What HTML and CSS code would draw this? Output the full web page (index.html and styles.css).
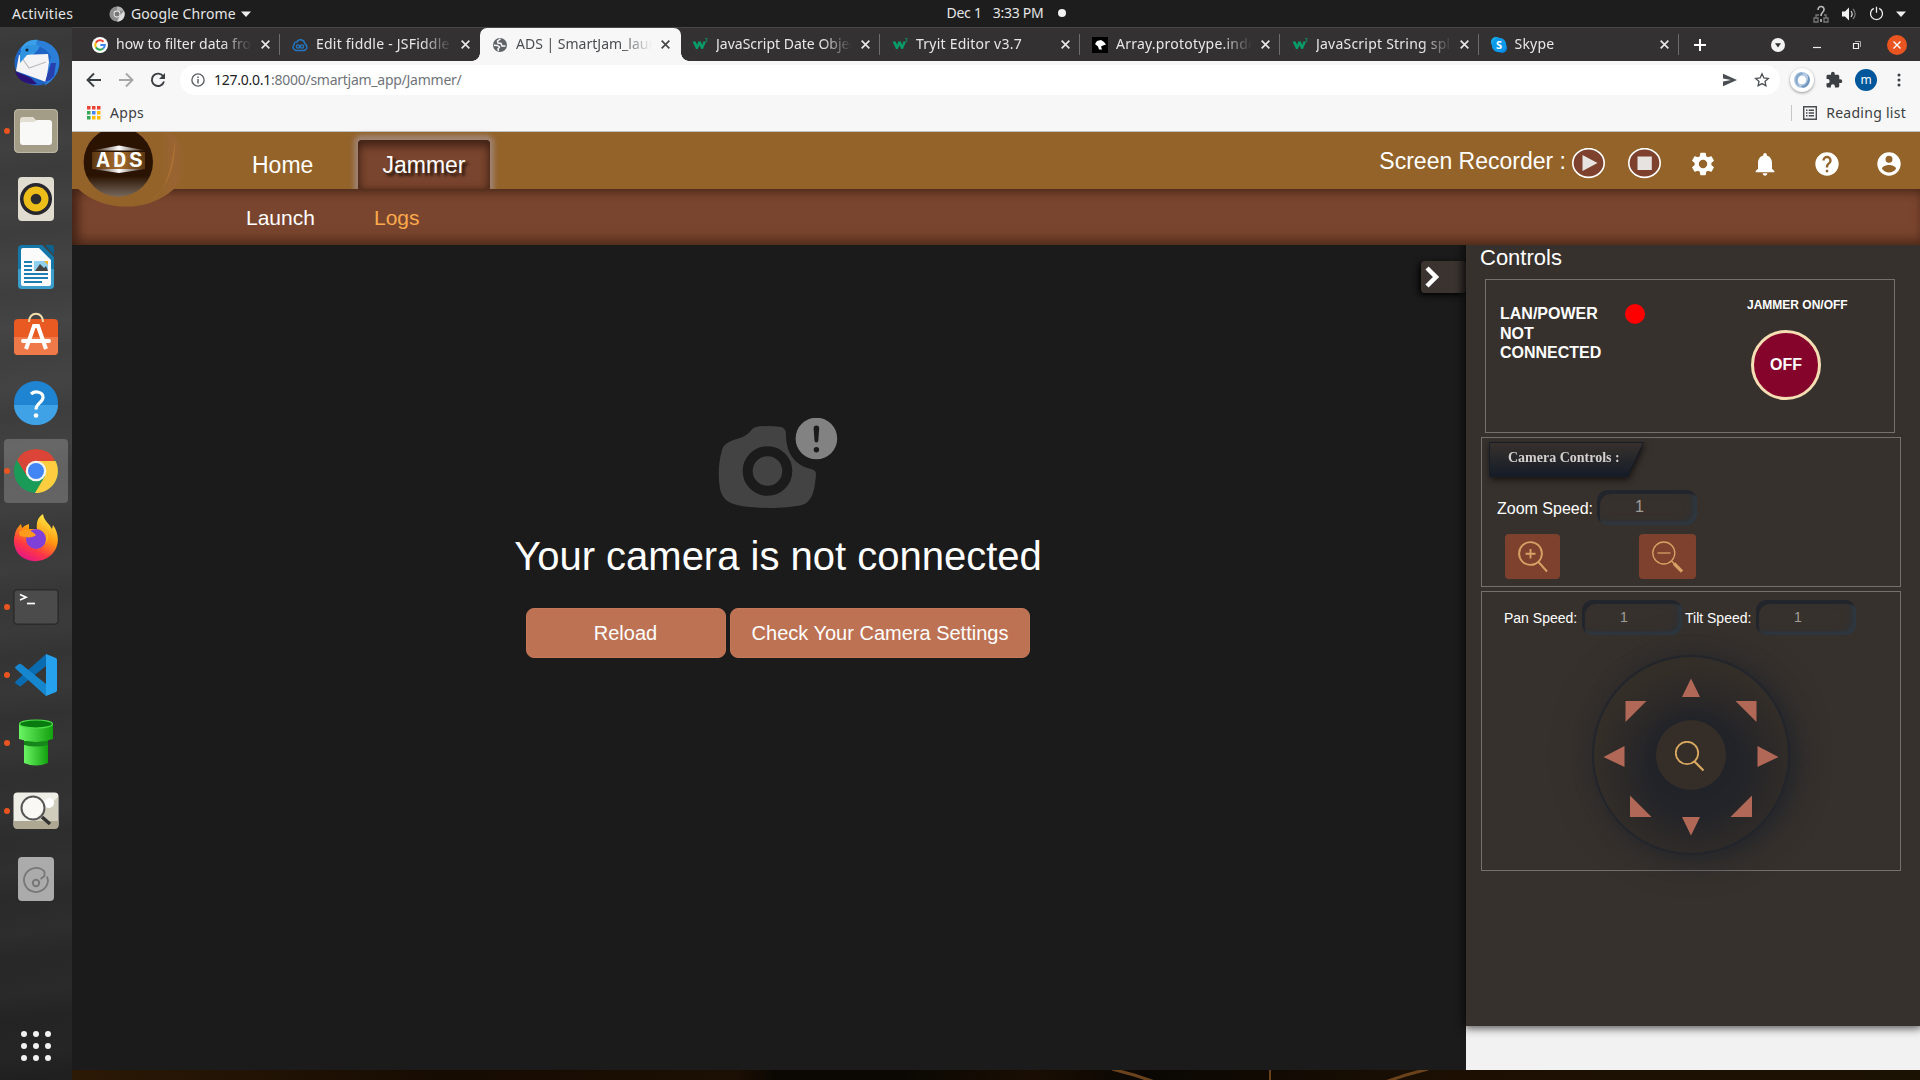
FILE: index.html
```html
<!DOCTYPE html>
<html lang="en">
<head>
<meta charset="utf-8">
<title>ADS | SmartJam_launch</title>
<link rel="stylesheet" href="styles.css">
</head>
<body>
<div class="desktop">
  <header class="topbar">
    <span class="activities">Activities</span>
    <span class="app-menu">
      <svg width="16" height="16" viewBox="0 0 16 16"><circle cx="8" cy="8" r="7.6" fill="#8d8d8d"/><path d="M8 .4a7.6 7.6 0 0 1 6.9 4.4H8z" fill="#b5b5b5"/><path d="M15 4.8A7.6 7.6 0 0 1 8 15.600l3-6z" fill="#ddd"/><circle cx="8" cy="8" r="3.400" fill="#eee"/><circle cx="8" cy="8" r="2.500" fill="#777"/></svg>
      <span class="app-name">Google Chrome</span>
      <svg width="10" height="6" viewBox="0 0 10 6"><path d="M0 .5h10L5 6z" fill="#eee"/></svg>
    </span>
    <span class="clock"><span>Dec 1</span><span>3:33 PM</span><i class="clock-dot"></i></span>
    <span class="status">
      <svg width="16" height="18" viewBox="0 0 16 18" fill="none" stroke="#777" stroke-width="1.300"><path d="M1 13h4v4H1zM11 13h4v4h-4zM3 13v-3h3M13 13v-3h-2"/><path d="M5 5c0-5 6.500-4.500 6 0-.3 2-3 2.500-3 6M8 14v3" stroke="#bbb" stroke-width="1.600"/></svg>
      <svg width="16" height="14" viewBox="0 0 16 14"><path d="M1 4.500h3L8 .5v13l-4-4H1z" fill="#f2f2f2"/><path d="M10 4c1.500 2 1.500 4 0 6" fill="none" stroke="#ddd" stroke-width="1.200"/><path d="M12 2c3 3.500 3 6.500 0 10" fill="none" stroke="#777" stroke-width="1.200"/></svg>
      <svg width="15" height="15" viewBox="0 0 15 15" fill="none" stroke="#eee" stroke-width="1.300"><path d="M7.500 .8v6M4.800 2.300a6 6 0 1 0 5.400 0"/></svg>
      <svg width="10" height="6" viewBox="0 0 10 6"><path d="M0 .5h10L5 6z" fill="#eee"/></svg>
    </span>
  </header>

  <div class="workspace">
    <nav class="dock">
      <div class="dock-item"><svg width="50" height="50" viewBox="0 0 50 50"><circle cx="26" cy="25" r="22.500" fill="#1f64c4"/><path d="M17 6C25-1 42 3 47 16c4 12-2 26-14 32 3-4 3-8 2-14l5-15C36 10 28 8 17 6z" fill="#2b7fd8"/><path d="M10 11c3-7 10-10 17-9-3 3-2 5 1 8l-8 9-11 5z" fill="#3ba0e8"/><path d="M8 17l29-1 1 8-3 20L5 33z" fill="#f4f4f6"/><path d="M9 17l9 13 17-6" fill="none" stroke="#bbb" stroke-width="1.200"/><path d="M4 33c6 3 10 4 16 7l6 6C15 47 7 43 4 33z" fill="#2b1276"/><path d="M40 25l-6 19 5-2 4-4 2-13z" fill="#283fae"/><path d="M9 16C11 8 19 5 29 8l-4 6-9 3-7 8z" fill="#2f93e0"/><circle cx="16" cy="12" r="1.500" fill="#123"/></svg></div>
      <div class="dock-item running"><svg width="44" height="44" viewBox="0 0 44 44"><rect width="44" height="44" rx="4.500" fill="#a39c86"/><rect x=".5" y=".5" width="43" height="43" rx="4" fill="none" stroke="#bdb7a5"/><path d="M6 11q0-3 3-3h10l4 4h12q3 0 3 3v9H6z" fill="#e2ded2"/><path d="M6 15q0-2 3-2h11l3-2h12q3 0 3 3v19q0 3-3 3H9q-3 0-3-3z" fill="#f9f9f8"/></svg></div>
      <div class="dock-item"><svg width="44" height="44" viewBox="0 0 44 44"><rect x="4" width="36" height="44" rx="4" fill="#e0dccf"/><circle cx="22" cy="22" r="16" fill="#26262e"/><circle cx="22" cy="22" r="12.500" fill="#edbd1a"/><circle cx="22" cy="22" r="5.300" fill="#2c2c2e"/></svg></div>
      <div class="dock-item"><svg width="44" height="44" viewBox="0 0 44 44"><path d="M8 0h20l12 12v28q0 4-4 4H8q-4 0-4-4V4q0-4 4-4z" fill="#1477a8"/><path d="M4 24h36v16q0 4-4 4H8q-4 0-4-4z" fill="#3a9dcb"/><path d="M9 3h16l12 12v24q0 2-2 2H9q-2 0-2-2V5q0-2 2-2z" fill="#fbfbfb"/><path d="M31 0h7q2 0 2 2v8z" fill="#10608c"/><path d="M10 17h8M10 21h8M10 25h8M10 29h24M10 33h24M10 37h18" stroke="#1b7db0" stroke-width="2"/><path d="M20 16h14v10H20z" fill="#8ed0ee"/><path d="M21 26l5-7 4 4 2-2 2 5z" fill="#444"/><path d="M30 16h4v4z" fill="#f0b429"/></svg></div>
      <div class="dock-item"><svg width="44" height="46" viewBox="0 0 44 46"><rect y="7" width="44" height="36" rx="4" fill="#e95a23"/><path d="M0 25h44v14q0 4-4 4H4q-4 0-4-4z" fill="#f0794a"/><path d="M15 10c0-11 14-11 14 0" fill="none" stroke="#f3dfae" stroke-width="2"/><path d="M12 37l8-23h4l8 23" fill="none" stroke="#fff" stroke-width="4"/><path d="M9 29h26" stroke="#fff" stroke-width="4" stroke-linecap="round"/></svg></div>
      <div class="dock-item"><svg width="44" height="44" viewBox="0 0 44 44"><circle cx="22" cy="22" r="22" fill="#1f84d2"/><path d="M0 24h44a22 20 0 0 1-44 0z" fill="#3fa2e6"/><path d="M17 13c4-3.500 12-2.500 12 3.500 0 5-7 5.500-7 12" fill="none" stroke="#fff" stroke-width="3.200"/><circle cx="22" cy="34.500" r="2.300" fill="#fff"/></svg></div>
      <div class="dock-item running focused"><svg width="46" height="46" viewBox="0 0 46 46"><circle cx="23" cy="23" r="22" fill="#1a9c58"/><path d="M23 23L3.900 12.100A22 22 0 0 1 42.100 12.100z" fill="#db4437"/><path d="M4 12l10 16 9-5z" fill="#db4437"/><path d="M23 13h19.500A22 22 0 0 1 22 45l10-17z" fill="#ffcd40"/><circle cx="23" cy="23" r="10.300" fill="#f4f4f4"/><circle cx="23" cy="23" r="8" fill="#4285f4"/></svg></div>
      <div class="dock-item"><svg width="46" height="50" viewBox="0 0 46 50"><defs><linearGradient id="fx" x1="0.800" y1="0" x2="0.300" y2="1"><stop offset="0" stop-color="#fff44f"/><stop offset=".45" stop-color="#ff980e"/><stop offset=".75" stop-color="#ff3647"/><stop offset="1" stop-color="#e31587"/></linearGradient></defs><path d="M2 20C3 15 5 13 8 10l1 4q3-3 7-4v5h8c-1-7 1-12 6-15 1 7 6 9 9 15l1-4c6 8 7 20 0 28-9 11-28 11-36-1C1 33 0 26 2 20z" fill="url(#fx)"/><circle cx="23" cy="25" r="10" fill="#8040d8"/><path d="M24 14c9-1 12 8 8 16 4-4 5-13-3-18z" fill="#ffb52a"/><path d="M6 18c6-4 12-2 17 3-5 4-10 2-16 1z" fill="#ff9a1c"/></svg></div>
      <div class="dock-item running"><svg width="46" height="36" viewBox="0 0 46 36"><rect x=".8" y=".8" width="44.400" height="34.400" rx="3.500" fill="#4b4b4b" stroke="#2b2b2b" stroke-width="1.500"/><path d="M7 5.500l6 2.800L7 11" fill="none" stroke="#fff" stroke-width="1.700"/><path d="M14 14.500h8" stroke="#fff" stroke-width="1.700"/></svg></div>
      <div class="dock-item running"><svg width="42" height="42" viewBox="0 0 42 42"><path d="M0 29l4 3q1 .5 2 0l25-20V0L1 27q-1 1-1 2z" fill="#0a6bb0"/><path d="M0 13l4-3q1-.5 2 0l25 20v12L1 15q-1-1-1-2z" fill="#1687cf"/><path d="M31 0l10 4q1 .5 1 2v30q0 1.500-1 2l-10 4z" fill="#25a1ee"/></svg></div>
      <div class="dock-item running"><svg width="36" height="48" viewBox="0 0 36 48"><defs><linearGradient id="pipe"><stop offset="0" stop-color="#6bf464"/><stop offset="1" stop-color="#12a00e"/></linearGradient></defs><path d="M6 20h24v24q-12 5-24 0z" fill="url(#pipe)"/><path d="M6 22h24v4q-12 3-24 0z" fill="#16861a"/><path d="M1 5h34v15q-17 6-34 0z" fill="url(#pipe)"/><ellipse cx="18" cy="5" rx="16.500" ry="4" fill="#087a10" stroke="#4ee048" stroke-width="1.200"/></svg></div>
      <div class="dock-item running"><svg width="46" height="38" viewBox="0 0 46 38"><rect x=".5" y=".5" width="45" height="36" rx="4" fill="#efeee6"/><path d="M45 5L20 29h25z" fill="#d0cdbd"/><path d="M.5 29h45v4q0 4-4 4h-37q-4 0-4-4z" fill="#aea791"/><circle cx="36" cy="11" r="5" fill="#fff"/><circle cx="20" cy="16" r="11.500" fill="#fff" fill-opacity=".6" stroke="#555" stroke-width="2"/><path d="M29 25l8 7" stroke="#333" stroke-width="3.500"/></svg></div>
      <div class="dock-item"><svg width="36" height="44" viewBox="0 0 36 44"><rect width="36" height="44" rx="4" fill="#ababab"/><path d="M26.500 14.500a12 12 0 1 0 3.500 9l-1-4M26.500 14.500v4.500l-4 3" fill="none" stroke="#777" stroke-width="1.800"/><circle cx="18" cy="26" r="3.200" fill="none" stroke="#777" stroke-width="2"/></svg></div>
      <div class="show-apps"><i></i><i></i><i></i><i></i><i></i><i></i><i></i><i></i><i></i></div>
    </nav>

    <main class="browser">
      <div class="tabstrip">
        <div class="tab">
          <svg class="favicon" viewBox="0 0 16 16"><circle cx="8" cy="8" r="8" fill="#fff"/><g fill="none" stroke-width="2.100"><path d="M11.500 4.700A4.800 4.800 0 0 0 3.900 5.600" stroke="#ea4335"/><path d="M3.900 5.600a4.800 4.800 0 0 0 0 4.800" stroke="#fbbc05"/><path d="M3.900 10.400a4.800 4.800 0 0 0 7.300 1.100" stroke="#34a853"/><path d="M11.200 11.500A4.800 4.800 0 0 0 12.800 8H8.300" stroke="#4285f4"/></g></svg>
          <span class="tab-title">how to filter data from</span><svg class="tab-close" viewBox="0 0 10 10"><path d="M1.500 1.500l7 7M8.500 1.500l-7 7"/></svg>
        </div>
        <div class="tab no-sep">
          <svg class="favicon" viewBox="0 0 16 16" fill="none" stroke="#2477c0" stroke-width="1.400"><path d="M4 13.500a3.400 3.400 0 0 1-1.700-6C2 5.500 3.700 4.500 5 5c1-3.200 7-3.200 7.700 1.500 3 1.500 3 6-.7 7z"/><circle cx="6" cy="9.500" r="1.600"/><circle cx="10" cy="9.500" r="1.600"/></svg>
          <span class="tab-title wide">Edit fiddle - JSFiddle -</span><svg class="tab-close" viewBox="0 0 10 10"><path d="M1.500 1.500l7 7M8.500 1.500l-7 7"/></svg>
        </div>
        <div class="tab active">
          <svg class="favicon" viewBox="0 0 16 16"><circle cx="8" cy="8" r="7" fill="#5f6368"/><path d="M2 8.200l3.300.3 2.200 1.500-1.500 2 .5 2M8.500 1.800L5.500 4l.5 2 3 .5 1 2.500 3.500 0" fill="none" stroke="#f7f7f7" stroke-width="1.500"/></svg>
          <span class="tab-title">ADS | SmartJam_launch</span><svg class="tab-close" viewBox="0 0 10 10"><path d="M1.500 1.500l7 7M8.500 1.500l-7 7"/></svg>
        </div>
        <div class="tab">
          <svg class="favicon w3" viewBox="0 0 16 16"><path d="M.5 4.500h3.200l1.500 3.600 1-3.600h2.600l1.500 3.600 1-3.600H14L11 12H9.300L7.500 8.300 5.800 12H4z" fill="#0a9c68"/><path d="M13.300 1.500h2l-1.200 1.400q1.400.3.900 1.400-.7.800-1.600.2" fill="none" stroke="#0a9c68" stroke-width=".8"/></svg>
          <span class="tab-title">JavaScript Date Objects</span><svg class="tab-close" viewBox="0 0 10 10"><path d="M1.500 1.500l7 7M8.500 1.500l-7 7"/></svg>
        </div>
        <div class="tab">
          <svg class="favicon w3" viewBox="0 0 16 16"><path d="M.5 4.500h3.200l1.500 3.600 1-3.600h2.600l1.500 3.600 1-3.600H14L11 12H9.300L7.500 8.300 5.800 12H4z" fill="#0a9c68"/><path d="M13.300 1.500h2l-1.200 1.400q1.400.3.900 1.400-.7.800-1.600.2" fill="none" stroke="#0a9c68" stroke-width=".8"/></svg>
          <span class="tab-title wide">Tryit Editor v3.7</span><svg class="tab-close" viewBox="0 0 10 10"><path d="M1.500 1.500l7 7M8.500 1.500l-7 7"/></svg>
        </div>
        <div class="tab">
          <svg class="favicon" viewBox="0 0 16 16"><rect width="16" height="16" fill="#000"/><path d="M3 7l2-3 4-1 3 2 2 2.500-3 1-2 1 1 3H7L6 9.500z" fill="#fff"/></svg>
          <span class="tab-title wide">Array.prototype.indexOf</span><svg class="tab-close" viewBox="0 0 10 10"><path d="M1.500 1.500l7 7M8.500 1.500l-7 7"/></svg>
        </div>
        <div class="tab narrow">
          <svg class="favicon w3" viewBox="0 0 16 16"><path d="M.5 4.500h3.200l1.500 3.600 1-3.600h2.600l1.500 3.600 1-3.600H14L11 12H9.300L7.500 8.300 5.800 12H4z" fill="#0a9c68"/><path d="M13.300 1.500h2l-1.200 1.400q1.400.3.900 1.400-.7.800-1.600.2" fill="none" stroke="#0a9c68" stroke-width=".8"/></svg>
          <span class="tab-title wide">JavaScript String split</span><svg class="tab-close" viewBox="0 0 10 10"><path d="M1.500 1.500l7 7M8.500 1.500l-7 7"/></svg>
        </div>
        <div class="tab">
          <svg class="favicon" viewBox="0 0 16 16"><circle cx="5" cy="5" r="5" fill="#16b2f2"/><circle cx="11" cy="11" r="5" fill="#0b84e0"/><circle cx="8" cy="8" r="7.300" fill="#0d9aea"/><text x="8" y="12" text-anchor="middle" class="skype-s">S</text></svg>
          <span class="tab-title wide">Skype</span><svg class="tab-close" viewBox="0 0 10 10"><path d="M1.500 1.500l7 7M8.500 1.500l-7 7"/></svg>
        </div>
        <svg class="new-tab" width="14" height="14" viewBox="0 0 14 14"><path d="M7 1v12M1 7h12" stroke="#fff" stroke-width="2"/></svg>
        <div class="window-buttons">
          <svg width="16" height="16" viewBox="0 0 16 16"><circle cx="8" cy="8" r="7" fill="#f3f3f3"/><path d="M5 6.300h6L8 10.500z" fill="#333"/></svg>
          <svg width="10" height="10" viewBox="0 0 10 10"><path d="M1 7.500h8" stroke="#eee" stroke-width="1.200"/></svg>
          <svg width="10" height="10" viewBox="0 0 10 10" fill="none" stroke="#eee"><path d="M1.500 3.500h5v5h-5z" stroke-width="1.200"/><path d="M3 1.500h5.500V7" stroke="#aaa"/></svg>
          <svg width="20" height="20" viewBox="0 0 20 20"><circle cx="10" cy="10" r="10" fill="#e95420"/><path d="M6.500 6.500l7 7M13.500 6.500l-7 7" stroke="#fff" stroke-width="1.400"/></svg>
        </div>
      </div>

      <div class="toolbar">
        <svg width="16" height="16" viewBox="0 0 16 16" fill="none" stroke="#3b3e42" stroke-width="1.900"><path d="M15 8H2M8 1.500L1.500 8 8 14.500"/></svg>
        <svg width="16" height="16" viewBox="0 0 16 16" fill="none" stroke="#a5a7a9" stroke-width="1.900"><path d="M1 8h13M8 1.500L14.500 8 8 14.500"/></svg>
        <svg width="16" height="16" viewBox="0 0 16 16" fill="none" stroke="#3b3e42" stroke-width="1.900"><path d="M13.300 4.500A6.200 6.200 0 1 0 14 9.500"/><path d="M15 1v6H9z" fill="#3b3e42" stroke="none"/></svg>
        <div class="omnibox">
          <svg width="14" height="14" viewBox="0 0 14 14"><circle cx="7" cy="7" r="6.100" fill="none" stroke="#5f6368" stroke-width="1.400"/><path d="M7 6v4.500M7 3.400v1.500" stroke="#5f6368" stroke-width="1.500"/></svg>
          <span class="url"><b>127.0.0.1</b>:8000/smartjam_app/Jammer/</span>
          <svg width="14" height="14" viewBox="0 0 14 14"><path d="M0 .8L14 7 0 13.200V8.500L8 7 0 5.500z" fill="#4a4d51"/></svg>
          <svg class="star" width="16" height="16" viewBox="0 0 16 16"><path d="M8 1.800l1.900 4.100 4.400.5-3.300 3 .9 4.400L8 11.600l-3.900 2.200.9-4.400-3.300-3 4.400-.5z" fill="none" stroke="#4a4d51" stroke-width="1.300"/></svg>
        </div>
        <div class="extensions">
          <span class="ext-bubble"><svg width="18" height="18" viewBox="0 0 18 18" fill="none"><circle cx="9" cy="9" r="6" stroke="#b4cae2" stroke-width="4"/><path d="M8 1.200A7.900 7.900 0 0 0 7 16c-2-2-3-4-2.500-7S7 3.500 11 3" fill="#86a8cc"/><path d="M10 16.800A7.900 7.900 0 0 0 14 3c1.500 3 1.500 5 0 8s-3 3.500-6 4" fill="#6f95c0"/><ellipse cx="9" cy="9" rx="3.200" ry="4.300" fill="#fff" transform="rotate(20 9 9)"/></svg></span>
          <svg width="18" height="18" viewBox="0 0 24 24"><path fill="#3b3e42" d="M20.500 11H19V7c0-1.100-.9-2-2-2h-4V3.500a2.500 2.500 0 0 0-5 0V5H4c-1.100 0-2 .9-2 2v3.800h1.500a2.700 2.700 0 0 1 0 5.400H2V20c0 1.100.9 2 2 2h3.800v-1.500a2.700 2.700 0 0 1 5.400 0V22H17c1.100 0 2-.9 2-2v-4h1.500a2.500 2.500 0 0 0 0-5z"/></svg>
          <span class="avatar">m</span>
          <svg width="4" height="16" viewBox="0 0 4 16" fill="#3b3e42"><circle cx="2" cy="3" r="1.500"/><circle cx="2" cy="8" r="1.500"/><circle cx="2" cy="13" r="1.500"/></svg>
        </div>
      </div>

      <div class="bookmarks">
        <div class="apps-link"><svg width="14" height="14" viewBox="0 0 14 14"><path d="M0 0h3.500v3.500H0zM5 0h3.500v3.500H5zM10 0h3.500v3.500H10z" fill="#ea4335"/><path d="M0 5h3.500v3.500H0zM0 10h3.500v3.500H0z" fill="#34a853"/><path d="M5 5h3.500v3.500H5z" fill="#4285f4"/><path d="M10 5h3.500v3.500H10zM5 10h3.500v3.500H5zM10 10h3.500v3.500H10z" fill="#fbbc05"/></svg><span>Apps</span></div>
        <div class="reading-list"><svg width="14" height="14" viewBox="0 0 14 14" fill="none" stroke="#4a4d51" stroke-width="1.400"><path d="M.7.700h12.600v12.600H.7zM3 4.200h1.500M5.700 4.200h5.300M3 7h1.500M5.700 7h5.300M3 9.800h1.500M5.700 9.800h5.300"/></svg><span>Reading list</span></div>
      </div>

      <div class="page">
        <div class="site-header">
          <nav class="main-nav"><a class="home">Home</a><a class="jammer">Jammer</a></nav>
          <div class="tools">
            <span class="rec-label">Screen Recorder :</span>
            <svg class="rec" width="33" height="32" viewBox="0 0 33 32"><ellipse cx="16.500" cy="15" rx="15.700" ry="14.400" fill="#7d412d" stroke="#fff" stroke-width="1.600"/><path d="M10.500 7v16l15-8z" fill="#e6e3e1"/></svg>
            <svg class="rec stop" width="33" height="32" viewBox="0 0 33 32"><ellipse cx="16.500" cy="15" rx="15.700" ry="14.400" fill="#7d412d" stroke="#fff" stroke-width="1.600"/><path d="M9.500 8.500h14.300v13.500H9.500z" fill="#e6e3e1"/></svg>
            <svg class="tool" viewBox="0 0 24 24"><path d="M19.140 12.940c.04-.3.060-.61.060-.94s-.02-.64-.07-.94l2.030-1.580a.49.490 0 0 0 .12-.61l-1.920-3.320a.488.488 0 0 0-.59-.22l-2.390.96c-.5-.38-1.030-.7-1.620-.94l-.36-2.540a.484.484 0 0 0-.48-.41h-3.840c-.24 0-.43.170-.47.410l-.36 2.540c-.59.240-1.130.57-1.620.94l-2.390-.96c-.22-.08-.47 0-.59.220L2.740 8.870c-.12.210-.08.470.12.610l2.030 1.580c-.05.300-.09.630-.09.940s.02.640.07.940l-2.030 1.580a.49.490 0 0 0-.12.610l1.920 3.320c.12.220.37.290.59.220l2.390-.96c.5.380 1.030.7 1.620.94l.36 2.540c.05.240.24.410.48.410h3.840c.24 0 .44-.17.470-.41l.36-2.540c.59-.24 1.130-.56 1.620-.94l2.390.96c.22.080.47 0 .59-.22l1.920-3.320a.47.470 0 0 0-.12-.61zM12 15.600a3.600 3.600 0 1 1 0-7.200 3.600 3.600 0 0 1 0 7.200z"/></svg>
            <svg class="tool" viewBox="0 0 24 24"><path d="M12 22c1.100 0 2-.9 2-2h-4a2 2 0 0 0 2 2zm6-6v-5c0-3.070-1.640-5.640-4.500-6.320V4a1.500 1.500 0 0 0-3 0v.68C7.630 5.360 6 7.920 6 11v5l-2 2v1h16v-1z"/></svg>
            <svg class="tool" viewBox="0 0 24 24"><path d="M12 2a10 10 0 1 0 0 20 10 10 0 0 0 0-20zm1 17h-2v-2h2zm2.070-7.750l-.9.920C13.450 12.900 13 13.500 13 15h-2v-.5c0-1.100.45-2.100 1.170-2.830l1.240-1.260A2 2 0 1 0 10 9H8a4 4 0 1 1 8 0c0 .88-.36 1.680-.93 2.250z"/></svg>
            <svg class="tool" viewBox="0 0 24 24"><path d="M12 2a10 10 0 1 0 0 20 10 10 0 0 0 0-20zm0 3a3 3 0 1 1 0 6 3 3 0 0 1 0-6zm0 14.200c-2.500 0-4.710-1.280-6-3.220.03-1.990 4-3.080 6-3.080s5.970 1.090 6 3.080a7.200 7.200 0 0 1-6 3.220z"/></svg>
          </div>
          <svg class="logo" width="128" height="78" viewBox="0 0 128 78">
            <defs>
              <linearGradient id="disc" x1="0" y1="0" x2="0" y2="1"><stop offset="0" stop-color="#2b1302"/><stop offset=".7" stop-color="#2b1302"/><stop offset="1" stop-color="#76685c"/></linearGradient>
              <linearGradient id="plate"><stop offset="0" stop-color="#5a3712"/><stop offset=".5" stop-color="#a96f2e"/><stop offset="1" stop-color="#5a3712"/></linearGradient>
              <linearGradient id="rim"><stop offset=".78" stop-color="#93632a"/><stop offset=".9" stop-color="#9a6432"/><stop offset="1" stop-color="#93632a"/></linearGradient>
              <linearGradient id="edge"><stop offset="0" stop-color="#fff" stop-opacity="0"/><stop offset=".5" stop-color="#fff"/><stop offset="1" stop-color="#fff" stop-opacity="0"/></linearGradient>
            </defs>
            <ellipse cx="54" cy="30.500" rx="60" ry="44" fill="url(#rim)"/>
            <path d="M103 7q-5 50-23 61 24-20 23-61" fill="#b87634" opacity=".7"/>
            <circle cx="46.300" cy="30" r="34.700" fill="url(#disc)"/>
            <rect x="20" y="20" width="53" height="17" fill="url(#plate)"/>
            <path d="M20 18.500l27-5 27 5zM20 37l27 4 27-4z" fill="url(#edge)"/>
            <text x="24.500" y="35" textLength="46" lengthAdjust="spacing" class="logo-text">ADS</text>
          </svg>
        </div>
        <nav class="sub-nav"><a class="launch">Launch</a><a class="logs">Logs</a></nav>

        <div class="content">
          <section class="camera-view">
            <svg class="camera-icon" width="120" height="92" viewBox="0 0 120 92">
              <path d="M38 9q12-2 25 0c4 1 5 4 5 8 0 20 11 31 25 34q5 1 5 5c-1 14-3 28-14 31-18 4-47 4-65 0C9 85 4 79 2.300 72 0 60 0 46 4 32c2-8 12-10 18-12 11-4 11-10 16-11z" fill="#434343"/>
              <circle cx="49.500" cy="53" r="19.800" fill="none" stroke="#1b1b1b" stroke-width="10"/>
              <circle cx="98.400" cy="20.500" r="20.800" fill="#828282"/>
              <path d="M95.600 10.500q0-3 2.800-3t2.800 3l-.8 11q0 3-2 3t-2-3z" fill="#1b1b1b"/><circle cx="98.400" cy="31.800" r="2.700" fill="#1b1b1b"/>
            </svg>
            <h1>Your camera is not connected</h1>
            <div class="actions"><button class="reload">Reload</button><button class="settings">Check Your Camera Settings</button></div>
            <div class="panel-toggle"><svg width="15" height="22" viewBox="0 0 15 22"><path d="M2 2l9 9-9 9" fill="none" stroke="#fff" stroke-width="4.500"/></svg></div>
          </section>

          <div class="side">
          <aside class="controls">
            <h2>Controls</h2>
            <section class="box power">
              <div class="lan">LAN/POWER<br>NOT<br>CONNECTED</div>
              <i class="led"></i>
              <div class="jam"><div class="jam-label">JAMMER ON/OFF</div><button class="off">OFF</button></div>
            </section>
            <section class="box zoom">
              <div class="ribbon"><svg width="155" height="35" viewBox="0 0 155 35"><defs><linearGradient id="rb" x1="0" y1="0" x2="0" y2="1"><stop offset="0" stop-color="#37312d"/><stop offset="1" stop-color="#151c28"/></linearGradient></defs><path d="M.5.500h154l-16 34H.5z" fill="url(#rb)" stroke="#161d27"/></svg><span>Camera Controls :</span></div>
              <div class="row zoom-row"><label>Zoom Speed:</label><div class="field">1</div></div>
              <div class="row zoom-buttons">
                <button class="zin"><svg width="30" height="32" viewBox="0 0 30 32" fill="none" stroke="#d9a066"><circle cx="12.500" cy="12.500" r="11.400" stroke-width="1.900"/><path d="M12.500 8v9.500M7.500 12.700h10" stroke-width="1.900"/><path d="M20.500 21l8.500 9.500" stroke-width="2"/></svg></button>
                <button class="zout"><svg width="31" height="32" viewBox="0 0 31 32" fill="none" stroke="#d9a066"><circle cx="11.800" cy="12" r="11" stroke-width="1.300"/><path d="M5.500 12h13" stroke-width="1.300"/><path d="M19.500 20l3 3" stroke-width="1.500"/><path d="M22 22.500l8 8" stroke-width="3.200"/></svg></button>
              </div>
            </section>
            <section class="box pan">
              <div class="row pan-row"><label>Pan Speed:</label><div class="field">1</div><label class="tilt">Tilt Speed:</label><div class="field">1</div></div>
              <div class="joystick">
                <div class="hub"><svg width="30" height="31" viewBox="0 0 30 31" fill="none" stroke="#d9a860"><circle cx="12" cy="12" r="11.200" stroke-width="1.800"/><path d="M19.500 20.500l9 9" stroke-width="2.200"/></svg></div>
                <svg class="arrows" width="200" height="200" viewBox="0 0 200 200" fill="#b16856"><path d="M100 23.500l9 18.500H91zM100 180.500l9-18.500H91zM12.500 102l21-11v21zM187.500 102l-21-11v21zM34.500 46h21l-21 21zM165.500 46h-21l21 21zM39 140.500V162h21.500zM161 140.500V162h-21.500z"/></svg>
              </div>
            </section>
          </aside>
          </div>
        </div>
        <div class="backdrop"><svg width="1848" height="10" viewBox="0 0 1848 10"><g fill="none" stroke="#6a421c" stroke-width="3"><path d="M1040-1l22 6 24 8M1356-1l-22 6-24 8"/><path d="M1198 0v10" stroke-width="2"/></g></svg></div>
      </div>
    </main>
  </div>
</div>
</body>
</html>
```
FILE: styles.css
```css
* { box-sizing: border-box; }
body { margin: 0; background: #000; overflow: hidden; font-family: "Liberation Sans", Arial, sans-serif; color: #fff; }
svg { display: block; flex: none; }
button { border: 0; padding: 0; font: inherit; color: inherit; }
h1, h2 { margin: 0; font-weight: 400; }
.desktop { width: 1920px; height: 1080px; display: flex; flex-direction: column; }

/* system bar */
.topbar { height: 27px; flex: none; background: #1d1d1d; display: grid; grid-template-columns: 1fr auto 1fr; align-items: center; grid-template-areas: "l c r"; font: 14px/26px "Noto Sans", sans-serif; color: #e6e6e6; }
.activities { grid-area: l; padding-left: 12px; letter-spacing: .3px; }
.app-menu { grid-area: l; display: flex; align-items: center; gap: 6px; padding-left: 109px; }
.app-name { letter-spacing: .1px; margin-right: -1px; }
.clock { grid-area: c; display: flex; align-items: center; gap: 11px; padding-left: 92px; letter-spacing: -.25px; margin-top: -1px; }
.clock-dot { width: 8px; height: 8px; border-radius: 50%; background: #f2f2f2; margin-left: 3px; }
.status { grid-area: r; display: flex; align-items: center; justify-content: flex-end; gap: 12px; padding-right: 14px; }

.workspace { flex: 1; min-height: 0; display: flex; }

/* dock */
.dock { width: 72px; flex: none; display: flex; flex-direction: column; align-items: center; gap: 4px; padding-top: 4px; background: repeating-linear-gradient(172deg, rgba(255,255,255,.012), rgba(0,0,0,.05) 26px, rgba(255,255,255,.012) 60px), linear-gradient(#3b3b3b, #434343 30%, #393939 55%, #303030 75%, #2a2a2a 88%, #212121); }
.dock-item { width: 64px; height: 64px; flex: none; display: grid; place-items: center; position: relative; border-radius: 4px; }
.running::before { content: ""; position: absolute; left: 0; top: 29px; width: 6px; height: 6px; border-radius: 50%; background: #e95420; }
.focused { background: rgba(255,255,255,.2); }
.show-apps { margin-top: auto; margin-bottom: 19px; display: grid; grid-template-columns: repeat(3, 6px); gap: 6px; }
.show-apps i { width: 6px; height: 6px; border-radius: 50%; background: #f2f2f2; }

/* browser chrome */
.browser { flex: 1; min-width: 0; display: flex; flex-direction: column; font-family: "Noto Sans", sans-serif; }
.tabstrip { height: 34px; flex: none; background: #333132; border-top: 1px solid #484646; display: flex; align-items: stretch; padding-left: 8px; }
.tab { width: 200px; flex: none; display: flex; align-items: center; padding-left: 12px; position: relative; color: #e8e8e8; }
.narrow { width: 198.500px; }
.tab::after { content: ""; position: absolute; right: 0; top: 6px; height: 21px; width: 1px; background: #6d6c6c; }
.no-sep::after { display: none; }
.favicon { width: 16px; height: 16px; }
.tab-title { font-size: 14px; line-height: 20px; width: 137px; margin: 0 8px 1px; white-space: nowrap; overflow: hidden; -webkit-mask-image: linear-gradient(90deg, #000 106px, transparent 136px); mask-image: linear-gradient(90deg, #000 106px, transparent 136px); }
.wide { letter-spacing: .22px; }
.narrow .tab-title { width: 135.500px; }
.tab-close { width: 11px; height: 11px; margin-left: -1px; fill: none; stroke: #e8e8e8; stroke-width: 1.500; }
.active { width: 201px; margin-right: -1px; background: #f7f7f7; color: #4a4d51; border-radius: 7px 7px 0 0; z-index: 1; }
.active::before, .active::after { content: ""; position: absolute; top: auto; bottom: 0; width: 8px; height: 8px; }
.active::before { left: -8px; background: radial-gradient(circle at 0 0, transparent 7.500px, #f7f7f7 8px); }
.active::after { right: -8px; background: radial-gradient(circle at 100% 0, transparent 7.500px, #f7f7f7 8px); }
.active .tab-close { stroke: #444; }
.skype-s { font: bold 11px "Noto Sans", sans-serif; fill: #fff; }
.new-tab { align-self: center; margin-left: 14px; }
.window-buttons { margin-left: auto; display: flex; align-items: center; padding-right: 13px; }
.window-buttons svg:nth-child(2) { margin-left: 26px; }
.window-buttons svg:nth-child(3) { margin-left: 30px; }
.window-buttons svg:nth-child(4) { margin-left: 25px; }
.toolbar { height: 38px; flex: none; background: #f7f7f7; display: flex; align-items: center; padding: 0 19px 0 14px; gap: 16px; }
.omnibox { flex: 1; height: 30px; margin-left: -2px; border-radius: 15px; background: #fff; display: flex; align-items: center; padding: 0 10px 0 11px; }
.url { flex: 1; padding-left: 9px; font-size: 14px; line-height: 20px; margin-top: -1px; color: #70747a; letter-spacing: -.26px; }
.url b { font-weight: 400; color: #202124; }
.star { margin-left: 17px; }
.extensions { display: flex; align-items: center; gap: 11px; margin-left: -6px; }
.ext-bubble { width: 24px; height: 24px; border-radius: 50%; background: #fff; box-shadow: 0 1px 3px rgba(0,0,0,.4); display: grid; place-items: center; }
.extensions > svg:last-child { margin-left: 9px; }
.avatar { width: 22px; height: 22px; border-radius: 50%; background: #01579b; color: #fff; font-size: 12px; line-height: 21px; text-align: center; margin-left: 1px; }
.bookmarks { height: 33px; flex: none; background: #f7f7f7; border-bottom: 1px solid #c3c3c0; display: flex; align-items: center; justify-content: space-between; padding: 0 14px 5px 15px; font-size: 14px; line-height: 20px; color: #3c4043; }
.apps-link { display: flex; align-items: center; gap: 9px; letter-spacing: .3px; }
.reading-list { display: flex; align-items: center; gap: 9px; border-left: 1px solid #c6c6c6; padding-left: 11px; height: 16px; letter-spacing: .27px; }

/* site */
.page { flex: 1; min-height: 0; display: flex; flex-direction: column; font-family: "Liberation Sans", Arial, sans-serif; background: #120a03; }
.site-header { height: 57px; flex: none; background: #93632a; display: flex; justify-content: space-between; position: relative; z-index: 1; }
.logo { position: absolute; left: 0; top: 0; }
.logo-text { font: bold 22px "Liberation Mono", monospace; fill: #fff; }
.main-nav { display: flex; padding-left: 180px; font-size: 23px; line-height: 50px; }
.home { width: 106px; padding-top: 8px; }
.jammer { width: 132px; height: 49px; margin-top: 8px; text-align: center; background: #7a452e; border-radius: 4px 4px 0 0; text-shadow: 3px 3px 3px #1a0f08; box-shadow: 0 -1px 5px 4px rgba(165,145,145,.7), inset 0 6px 9px rgba(50,25,15,.7), inset 0 0 8px rgba(60,30,18,.6); clip-path: inset(-12px -12px 0 -12px); }
.tools { display: flex; align-items: center; padding: 6px 17px 0 0; }
.rec-label { font-size: 23px; line-height: 28px; margin-top: -5px; margin-right: 6px; }
.stop { margin: 0 28px 0 23px; }
.tool { width: 28px; height: 28px; fill: #fff; margin-right: 34px; }
.tool:last-child { margin-right: 0; }
.sub-nav { height: 56px; flex: none; background: #7a452e; box-shadow: inset 0 9px 9px -5px rgba(60,32,18,.6), inset 0 -9px 11px -3px rgba(60,32,18,.6), inset 10px 0 8px -3px rgba(50,26,16,.6); display: flex; padding-left: 174px; font-size: 21px; line-height: 57px; }
.launch { width: 128px; }
.logs { color: #fba94c; }
.content { flex: 1; min-height: 0; display: flex; }
.camera-view { width: 1394px; flex: none; background: #1b1b1b; position: relative; display: flex; flex-direction: column; align-items: center; padding: 173px 0 0 18px; }
h1 { font-size: 40px; line-height: 48px; margin-top: 22px; }
.actions { display: flex; gap: 4px; margin-top: 28px; }
.reload, .settings { height: 50px; width: 200px; border-radius: 8px; background: #bd7254; border: 1px solid #c47857; font-size: 20px; line-height: 48px; }
.reload { padding-right: 1px; }
.settings { width: 300px; }
.panel-toggle { position: absolute; right: 0; top: 16px; width: 45px; height: 32px; padding: 5px 4px; border-radius: 4px; background: linear-gradient(90deg, #3a3330 80%, #2a2523); box-shadow: -2px 2px 6px #000; }
.side { flex: 1; background: #f2f2f2; position: relative; }
.controls { height: 781px; background: #37312d; padding-left: 15px; box-shadow: 0 0 9px 2px rgba(0,0,0,.7); clip-path: inset(0 0 -20px -12px); }
h2 { font-size: 22px; line-height: 26px; height: 34px; margin-left: -1px; }
.box { border: 1px solid #74706d; width: 420px; }
.power { width: 410px; height: 154px; margin: 0 0 4px 4px; display: flex; padding-left: 14px; font-weight: 700; font-size: 16px; }
.lan { width: 125px; padding-top: 24px; line-height: 19.500px; }
.led { width: 20px; height: 20px; border-radius: 50%; background: #f00; margin-top: 24px; }
.jam { margin-left: 102px; padding-top: 17px; }
.jam-label { font-size: 12px; line-height: 17px; }
.off { display: block; width: 70px; height: 70px; border: 3px solid #f5deb3; border-radius: 50%; background: #85042c; margin: 16px 0 0 4px; font-size: 16px; font-weight: 700; text-align: center; }
.zoom { height: 150px; margin-bottom: 4px; padding: 4px 0 0 7px; }
.ribbon { display: grid; filter: drop-shadow(1px 3px 3px rgba(10,8,8,.7)); font: bold 14px/32px "Liberation Serif", serif; color: #d4d0cd; height: 35px; }
.ribbon > * { grid-area: 1 / 1; }
.ribbon span { padding-left: 19px; }
.row { display: flex; }
.row label { line-height: 34px; }
.field { width: 100px; height: 35px; border-radius: 11px; text-align: center; padding-right: 15px; line-height: 33px; color: #a09c99; box-shadow: inset 3px 4px 0 #22252c, inset -3px -3px 3px #2e3841, inset -4px -1px 8px #2b333b; }
.zoom-row { margin-top: 13px; padding-left: 8px; font-size: 16px; }
.zoom-row label { width: 100px; padding-top: 2px; }
.zoom-buttons { margin-top: 8px; padding-left: 16px; gap: 79px; }
.zin, .zout { width: 55px; height: 45px; background: #7d412d; border-radius: 4px; display: grid; place-items: center; }
.zout { width: 57px; }
.pan { height: 280px; padding: 8px 0 0 22px; font-size: 14px; }
.pan-row label { width: 78px; padding-top: 1px; }
.pan-row .tilt { width: 71px; margin-left: 3px; }
.pan-row .field { line-height: 34px; padding-right: 16px; }
.joystick { width: 198px; height: 200px; margin: 20px 0 0 88px; border-radius: 50%; background: radial-gradient(circle at 53% 57%, #22242a 30%, rgba(36,36,40,.7) 42%, rgba(50,45,40,0) 68%), #342e28; border: 2px solid #22252b; position: relative; display: grid; place-items: center; box-shadow: 7px 4px 22px rgba(33,36,42,.85), 0 0 40px rgba(35,37,43,.35); }
.hub { width: 70px; height: 70px; border-radius: 50%; background: #352e28; display: grid; place-items: center; padding: 2px 1px 0 0; box-shadow: 0 0 7px 3px #22242a; }
.hub svg { margin-left: -1px; }
.arrows { position: absolute; left: -3px; top: -2px; }
.backdrop { height: 10px; flex: none; overflow: hidden; background: linear-gradient(90deg, #2c1906, #170c02 20%, #1c0f03 36%, #0b0803 38% 45%, #1a0e03 52%, #0a0703 58%, #1d1003 75%, #1c1204 100%); }
```
